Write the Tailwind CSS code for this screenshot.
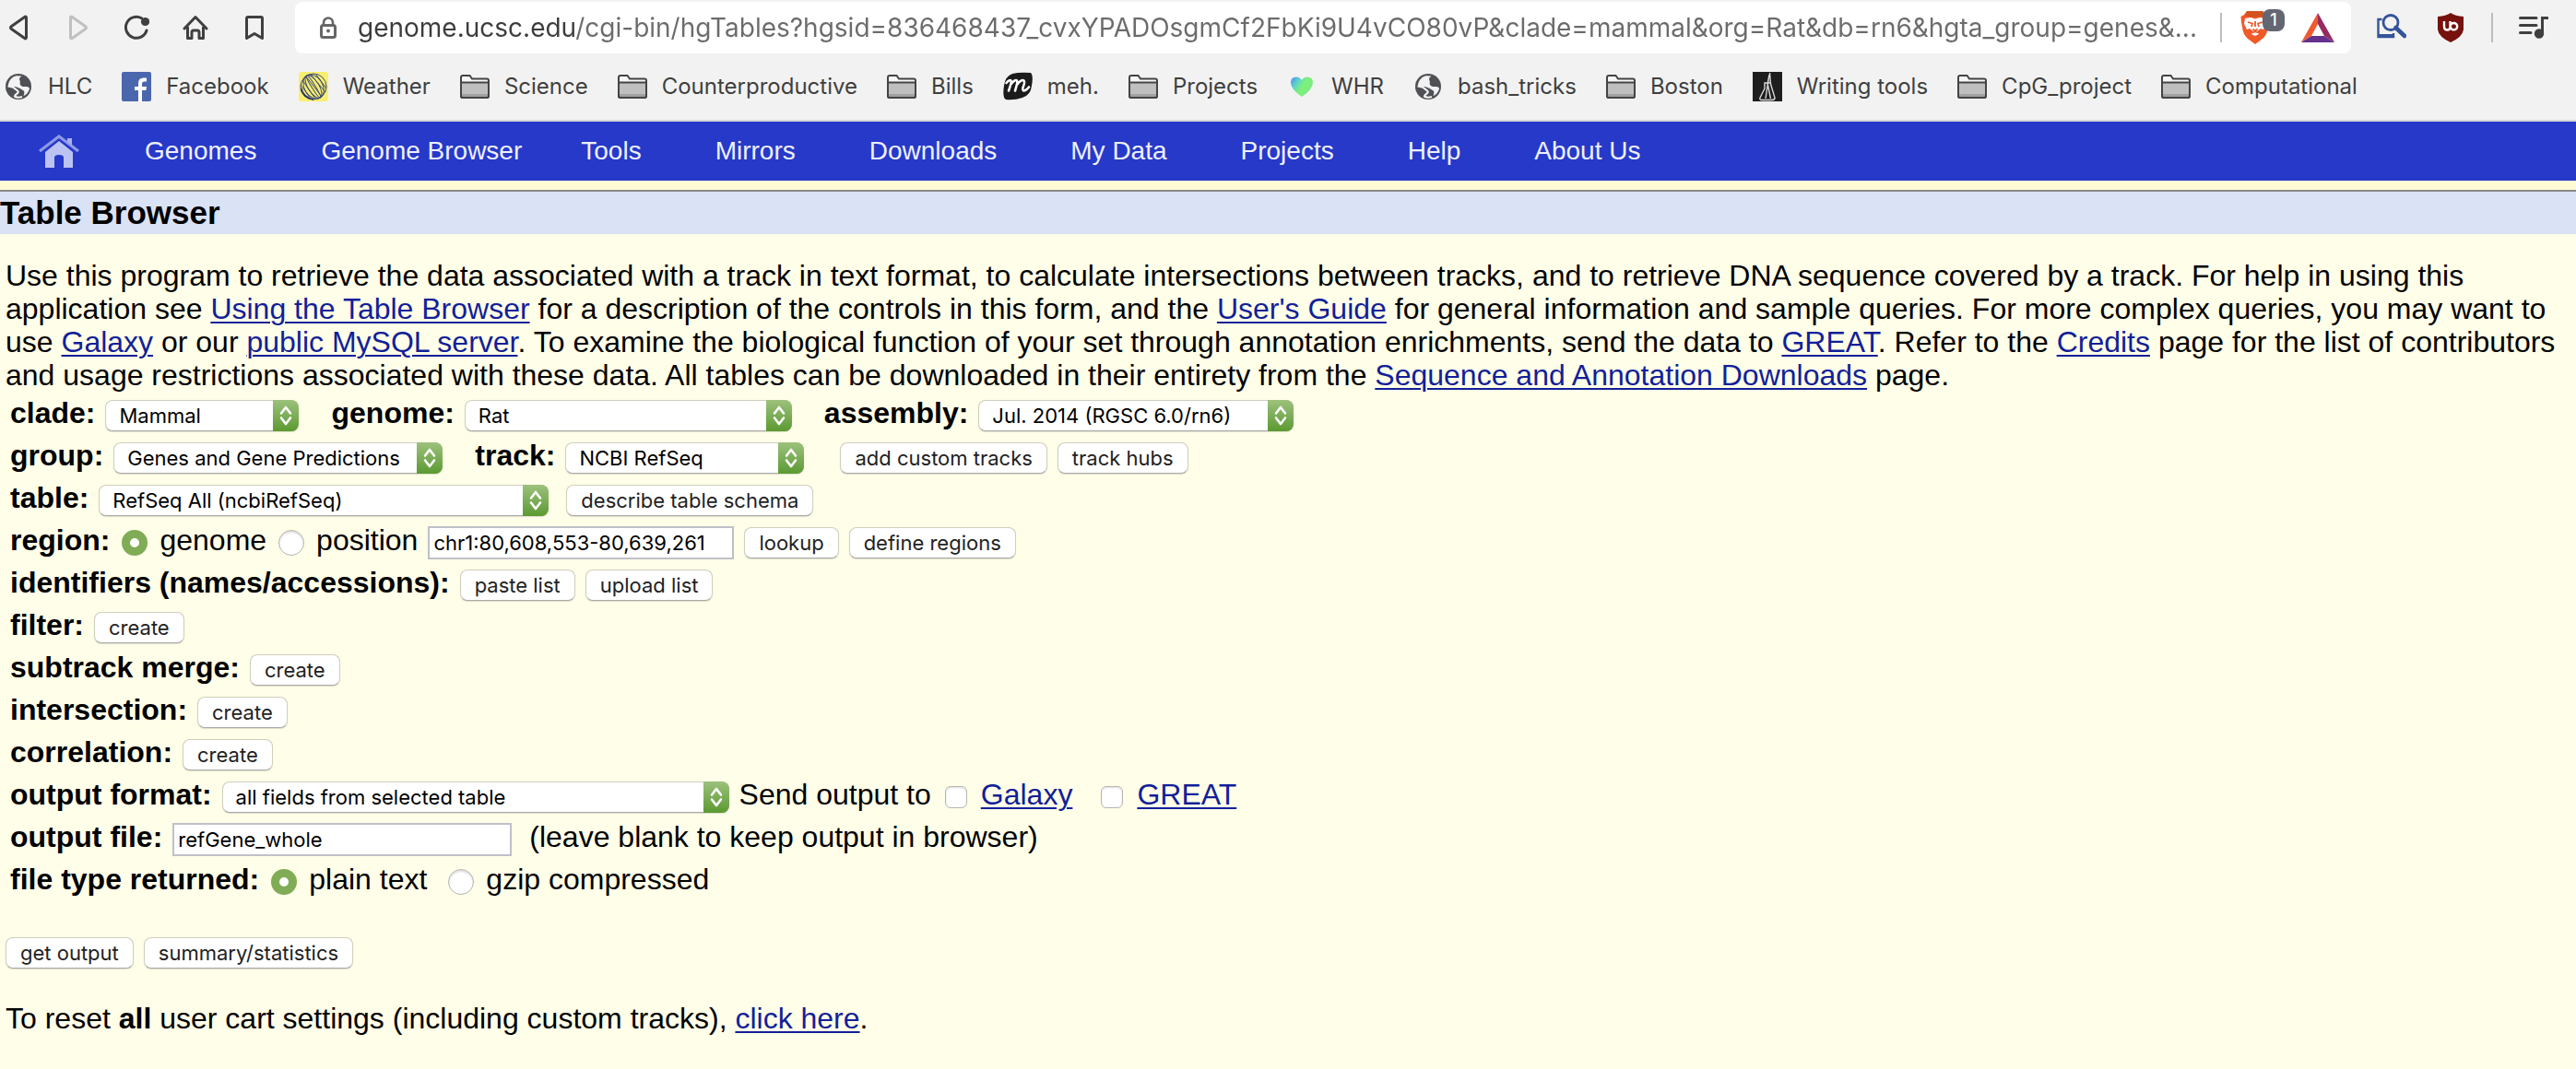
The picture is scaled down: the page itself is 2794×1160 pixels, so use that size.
<!DOCTYPE html>
<html lang="en">
<head>
<meta charset="utf-8">
<meta name="viewport" content="width=device-width, initial-scale=1">
<title>Table Browser</title>
<script src="https://cdn.jsdelivr.net/npm/@tailwindcss/browser@4"></script>
</head>
<body class="min-h-screen bg-[#fffee8] font-['Liberation_Sans',Arial,sans-serif] text-[32px] leading-[36px] text-black">

<!-- Shared icon shapes -->
<svg class="hidden">
  <symbol id="folder" viewBox="0 0 32 26">
    <path d="M1 23V3Q1 1 3 1H10.500L13 4.500H29Q31 4.500 31 6.500V23Q31 25 29 25H3Q1 25 1 23Z" fill="#f7f7f7" stroke="#444" stroke-width="2"/>
    <path d="M2 9H30V24H2Z" fill="#bfbfbf"/><path d="M2 21H30V24H2Z" fill="#a2a2a2"/>
    <path d="M1 8.500H31" stroke="#444" stroke-width="2"/>
    <path d="M1 9V23Q1 25 3 25H29Q31 25 31 23V9" fill="none" stroke="#444" stroke-width="2"/>
  </symbol>
  <symbol id="globe" viewBox="0 0 32 32">
    <circle cx="16" cy="16" r="14" fill="#505157"/>
    <path d="M19.500 4.500C17 6 16.500 8 17.500 9.500C18.500 11 17 12.500 18 14C19.500 16.500 22 16 24.500 16C27 16 28 17 28 18.500C27 22 24.500 25 21.500 26C22.500 23 23 21 21 20C18.500 18.500 17 17.500 14 16.500C11 15.500 8.500 16.500 5 16C4.500 10 9 5 14 4.200Z" fill="#f2f2f2"/>
    <path d="M4.500 15.500C8 16 11 16.500 12.500 18.500C14 20 16.500 20.500 15.500 22.500C15 24 12.500 24 12 26.500C14 28 17 28 20 27" fill="none" stroke="#f2f2f2" stroke-width="2.200"/>
    <path d="M11 7.500C13 8.500 16 9.500 14 11.500C12 12 10 12.500 9.500 14.500L5.500 13C6 10.500 8 8.500 11 7.500Z" fill="#505157" opacity=".0"/>
  </symbol>
  <symbol id="updown" viewBox="0 0 28 34">
    <path d="M9 14.500L14 8L19 14.500M9 19.500L14 26L19 19.500" fill="none" stroke="#fff" stroke-width="2.600" stroke-linecap="round" stroke-linejoin="round"/>
  </symbol>
</svg>

<header class="border-b-2 border-[#d6d8dc] bg-[#f2f2f2] pt-[2px] font-[Inter,sans-serif] text-[#3f3f3f]">
  <!-- Toolbar -->
  <div class="flex h-14 items-center gap-6 pr-[26px]">
    <button aria-label="Back" class="flex w-10 justify-center"><svg class="size-7" viewBox="0 0 28 28" fill="none" stroke="#3f3f3f" stroke-width="3" stroke-linejoin="round"><path d="M22.500 3V25Q22 27 20 25L6.500 15.500Q4.500 14 6.500 12.500L20 3Q22.500 1 22.500 3Z"/></svg></button>
    <button aria-label="Forward" class="flex w-10 justify-center"><svg class="size-7" viewBox="0 0 28 28" fill="none" stroke="#c0c0c0" stroke-width="3" stroke-linejoin="round"><path d="M6.500 3V25Q7 27 9 25L22.500 15.500Q24.500 14 22.500 12.500L9 3Q6.500 1 6.500 3Z"/></svg></button>
    <button aria-label="Reload" class="flex w-10 justify-center"><svg class="size-7" viewBox="0 0 28 28"><path d="M19.500 3.700A11.500 11.500 0 1 0 25 17" fill="none" stroke="#3f3f3f" stroke-width="3" stroke-linecap="round"/><circle cx="23.500" cy="7.500" r="4.600" fill="#3f3f3f"/></svg></button>
    <button aria-label="Home" class="flex w-10 justify-center"><svg class="size-7" viewBox="0 0 28 28" fill="none" stroke="#3f3f3f" stroke-width="3" stroke-linejoin="round" stroke-linecap="round"><path d="M2 15L14 2.500L26 15M5.500 13V25.500H10V19Q10 17 12 17H16Q18 17 18 19V25.500H22.500V13"/></svg></button>
    <button aria-label="Bookmark" class="flex w-10 justify-center"><svg class="size-7" viewBox="0 0 28 28" fill="none" stroke="#3f3f3f" stroke-width="3" stroke-linejoin="round"><path d="M5.500 4Q5.500 2.500 7 2.500H21Q22.500 2.500 22.500 4V25.500L14 20.500L5.500 25.500Z"/></svg></button>
    <div class="flex h-14 min-w-0 flex-1 items-center rounded-lg bg-white pr-[18px] pl-6">
      <svg class="size-6 shrink-0" viewBox="0 0 24 24"><path d="M7 10V6.500A5 5 0 0 1 17 6.500V10" fill="none" stroke="#666" stroke-width="2.600"/><rect x="4.500" y="9.500" width="15" height="13" rx="2" fill="none" stroke="#666" stroke-width="3"/><circle cx="12" cy="15.500" r="2" fill="#666"/></svg>
      <input type="text" aria-label="Address" class="ml-5 h-10 min-w-0 flex-1 bg-[linear-gradient(90deg,#3c3c3c_236px,#6b6b6b_236px)] bg-clip-text text-[28px] text-transparent outline-none" value="genome.ucsc.edu/cgi-bin/hgTables?hgsid=836468437_cvxYPADOsgmCf2FbKi9U4vCO80vP&amp;clade=mammal&amp;org=Rat&amp;db=rn6&amp;hgta_group=genes&amp;...">
      <div class="h-8 w-[2px] bg-[#bdbdbd]"></div>
      <button aria-label="Shields" class="relative ml-5 h-9 w-8">
        <svg class="h-9 w-8" viewBox="0 0 32 36"><path d="M7 0H24L28 4L31 7L29.500 12V20Q28.500 26 24 30L16 36L8 30Q3.500 26 2.500 20L1 12L0.500 6L4 4Z" fill="#f0592a"/><path d="M7 0H24L27 5Q16 8 5 5Z" fill="#d3521f"/><path d="M5 8L11 7L16 8.500L21 7L27 8L28 14L25 20L22 19L18 22L20 25L16 27L12 25L14 22L10 19L7 20L4 14Z" fill="#fff"/><path d="M8 12L13 13.500L12 17M24 12L19 13.500L20 17M16 11V17M13.500 19.500L16 21.500L18.500 19.500M10 24L16 22.500L22 24" fill="none" stroke="#f0592a" stroke-width="1.800"/></svg>
        <span class="absolute -top-[2px] left-6 flex size-6 items-center justify-center rounded-lg bg-[#646672] text-[18px] leading-6 font-medium text-white">1</span>
      </button>
      <button aria-label="Rewards" class="ml-[34px]"><svg class="h-8 w-9" viewBox="0 0 36 32"><path d="M18 0L0 32L11 25L18 12Z" fill="#f1592f"/><path d="M18 0L36 32L25 25L18 12Z" fill="#962b60"/><path d="M0 32H36L25 25H11Z" fill="#65318e"/></svg></button>
    </div>
    <button aria-label="Image search" class="flex w-10 justify-center"><svg class="size-8" viewBox="0 0 32 32"><path d="M5.500 7H1.500V26H18V22" fill="none" stroke="#34539b" stroke-width="2.400"/><path d="M1 23H18V27H1Z" fill="#34539b"/><circle cx="15" cy="10.500" r="8" fill="#f2f2f2" stroke="#34539b" stroke-width="2.800"/><path d="M20.500 16L30 25" stroke="#34539b" stroke-width="4.500" stroke-linecap="round"/></svg></button>
    <button aria-label="Content blocker" class="flex w-10 justify-center"><svg class="h-8 w-7" viewBox="0 0 28 32"><path d="M14 0Q19 3.500 28 4V18Q27 26 14 32Q1 26 0 18V4Q9 3.500 14 0Z" fill="#76110d"/><path d="M7 9V15Q7 18.500 10.500 18.500Q13.500 18.500 13.500 15V9M13.800 14.500A3.700 3.700 0 1 0 17.500 11Q13.800 11 13.500 15" fill="none" stroke="#fff" stroke-width="2.400"/></svg></button>
    <div class="h-8 w-[2px] bg-[#bdbdbd]"></div>
    <button aria-label="Media queue" class="flex w-10 justify-center"><svg class="size-8" viewBox="0 0 32 32" stroke="#3f3f3f" stroke-width="3"><path d="M1.500 5.500H19M1.500 13.500H19M1.500 21.500H13" stroke-linecap="round"/><path d="M25.500 22V5.500H31" fill="none" stroke-linecap="round"/><circle cx="22" cy="22.500" r="3.700" fill="#3f3f3f"/></svg></button>
  </div>

  <!-- Bookmarks bar -->
  <nav aria-label="Bookmarks" class="flex h-18 items-center gap-8 pl-1 text-[24px] whitespace-nowrap">
    <a href="#" class="flex items-center gap-4"><svg class="size-8"><use href="#globe"/></svg>HLC</a>
    <a href="#" class="flex items-center gap-4"><svg class="size-8" viewBox="0 0 32 32"><rect width="32" height="32" rx="2" fill="#4a66ad"/><path d="M18 32V20H14V16H18V12.500Q18 6.500 23.500 6.500H27V10.500H24.500Q22 10.500 22 13V16H27L26.400 20H22V32Z" fill="#fff"/></svg>Facebook</a>
    <a href="#" class="flex items-center gap-4"><svg class="size-8" viewBox="0 0 32 32"><rect width="32" height="32" rx="3" fill="#f9ee70"/><g fill="none" stroke="#3c4c72" stroke-width="1"><circle cx="16" cy="16" r="14"/><ellipse cx="16" cy="16" rx="14" ry="10" transform="rotate(58 16 16)"/><ellipse cx="16" cy="16" rx="14" ry="6" transform="rotate(58 16 16)"/><ellipse cx="16" cy="16" rx="14" ry="2" transform="rotate(58 16 16)"/><path d="M4 9L18 29M8 5L25 27M13 3L29 22M19 3L30 18M2 14L13 29"/></g><path d="M2.500 18Q5 28 16 30" fill="none" stroke="#27386b" stroke-width="2"/></svg>Weather</a>
    <a href="#" class="flex items-center gap-4"><svg class="h-[26px] w-8"><use href="#folder"/></svg>Science</a>
    <a href="#" class="flex items-center gap-4"><svg class="h-[26px] w-8"><use href="#folder"/></svg>Counterproductive</a>
    <a href="#" class="flex items-center gap-4"><svg class="h-[26px] w-8"><use href="#folder"/></svg>Bills</a>
    <a href="#" class="flex items-center gap-4"><svg class="size-8" viewBox="0 0 32 32"><path d="M10 2Q18 0 30 1Q33 4 31 15Q30 25 21 28Q12 31 3 30Q-1 28 1 15Q2 5 10 2Z" fill="#1b1b1b"/><path d="M3.500 12Q7 8 8.500 9.500Q9.500 11 6 20.500M8 14Q13 7.500 15 9.500Q16 11 13 20.500M15 14Q20 7.500 22.500 9.500Q24 11 21.500 17Q20.500 21.500 24 20Q26 19 28 16.500" fill="none" stroke="#fff" stroke-width="2.600" stroke-linecap="round"/></svg>meh.</a>
    <a href="#" class="flex items-center gap-4"><svg class="h-[26px] w-8"><use href="#folder"/></svg>Projects</a>
    <a href="#" class="flex items-center gap-4"><svg class="size-8" viewBox="0 0 32 32"><defs><linearGradient id="heart" x1="0" y1="0" x2="1" y2=".6"><stop offset="0" stop-color="#4d8cf5"/><stop offset=".35" stop-color="#62d6c4"/><stop offset=".6" stop-color="#7cf277"/><stop offset="1" stop-color="#7ee88a"/></linearGradient></defs><path d="M16 27Q4 19 4 11.500Q4 5.500 10 5.500Q14 5.500 16 9Q18 5.500 22 5.500Q28 5.500 28 11.500Q28 19 16 27Z" fill="url(#heart)"/></svg>WHR</a>
    <a href="#" class="flex items-center gap-4"><svg class="size-8"><use href="#globe"/></svg>bash_tricks</a>
    <a href="#" class="flex items-center gap-4"><svg class="h-[26px] w-8"><use href="#folder"/></svg>Boston</a>
    <a href="#" class="flex items-center gap-4"><svg class="size-8" viewBox="0 0 32 32"><rect width="32" height="32" fill="#1e1e1e"/><path d="M18.500 1L19.500 13L24 28Q24 30.500 21 30.500H10Q7 30.500 8 28L13 18V12H19M17.500 6L14 29M16 12L19.500 29M18 3L16 14" fill="none" stroke="#d8d8d8" stroke-width="1.400"/></svg>Writing tools</a>
    <a href="#" class="flex items-center gap-4"><svg class="h-[26px] w-8"><use href="#folder"/></svg>CpG_project</a>
    <a href="#" class="flex items-center gap-4"><svg class="h-[26px] w-8"><use href="#folder"/></svg>Computational</a>
  </nav>
</header>

<!-- Site menu -->
<nav aria-label="Main menu" class="mb-[10px] flex h-16 items-center bg-[#2639c9] pl-[42px] text-[28px] whitespace-nowrap text-[#eef0ff]">
  <a href="#" aria-label="Home" class="mr-[71px]"><svg class="h-9 w-11" viewBox="0 0 44 36"><path d="M1 18L22 2L43 18" fill="none" stroke="#8f99e6" stroke-width="3"/><path d="M31 4H36V12L31 8Z" fill="#a8b0ee"/><path d="M7 19L22 7L37 19V36H27V25Q27 22 22 22Q17 22 17 25V36H7Z" fill="#bcc3f2"/></svg></a>
  <a href="#" class="mr-[70px]">Genomes</a>
  <a href="#" class="mr-16">Genome Browser</a>
  <a href="#" class="mr-20">Tools</a>
  <a href="#" class="mr-20">Mirrors</a>
  <a href="#" class="mr-20">Downloads</a>
  <a href="#" class="mr-20">My Data</a>
  <a href="#" class="mr-20">Projects</a>
  <a href="#" class="mr-20">Help</a>
  <a href="#">About Us</a>
</nav>

<main>
  <h1 class="border-t-2 border-[#888] bg-[#dae2f5] text-[35px] leading-[46px] font-bold shadow-[0_-10px_0_#fffad6]">Table Browser</h1>

  <p class="mt-[27px] px-[6px]">Use this program to retrieve the data associated with a track in text format, to calculate intersections between tracks, and to retrieve DNA sequence covered by a track. For help in using this application see <a href="#" class="text-[#121f99] underline decoration-2 underline-offset-[3px]">Using the Table Browser</a> for a description of the controls in this form, and the <a href="#" class="text-[#121f99] underline decoration-2 underline-offset-[3px]">User's Guide</a> for general information and sample queries. For more complex queries, you may want to use <a href="#" class="text-[#121f99] underline decoration-2 underline-offset-[3px]">Galaxy</a> or our <a href="#" class="text-[#121f99] underline decoration-2 underline-offset-[3px]">public MySQL server</a>. To examine the biological function of your set through annotation enrichments, send the data to <a href="#" class="text-[#121f99] underline decoration-2 underline-offset-[3px]">GREAT</a>. Refer to the <a href="#" class="text-[#121f99] underline decoration-2 underline-offset-[3px]">Credits</a> page for the list of contributors and usage restrictions associated with these data. All tables can be downloaded in their entirety from the <a href="#" class="text-[#121f99] underline decoration-2 underline-offset-[3px]">Sequence and Annotation Downloads</a> page.</p>

  <form class="leading-[46px] whitespace-nowrap" onsubmit="return false">
    <div class="flex h-[46px] items-baseline gap-[11px] pl-[11px]">
      <label for="clade" class="font-bold">clade:</label>
      <span class="relative flex"><select id="clade" class="h-[34px] w-[210px] appearance-none rounded-lg border border-[#cfcfbf] border-b-[#aaa] bg-white pr-8 pl-[14px] font-[Inter,sans-serif] text-[22px] leading-8 text-black shadow-[0_1px_1px_#0002]"><option>Mammal</option></select><svg class="pointer-events-none absolute inset-y-0 right-0 h-[34px] w-7 rounded-r-lg bg-linear-to-b from-[#9dc17c] to-[#5b9a2f]"><use href="#updown"/></svg></span>
      <label for="org" class="ml-6 font-bold">genome:</label>
      <span class="relative flex"><select id="org" class="h-[34px] w-[355px] appearance-none rounded-lg border border-[#cfcfbf] border-b-[#aaa] bg-white pr-8 pl-[14px] font-[Inter,sans-serif] text-[22px] leading-8 text-black shadow-[0_1px_1px_#0002]"><option>Rat</option></select><svg class="pointer-events-none absolute inset-y-0 right-0 h-[34px] w-7 rounded-r-lg bg-linear-to-b from-[#9dc17c] to-[#5b9a2f]"><use href="#updown"/></svg></span>
      <label for="db" class="ml-6 font-bold">assembly:</label>
      <span class="relative flex"><select id="db" class="h-[34px] w-[342px] appearance-none rounded-lg border border-[#cfcfbf] border-b-[#aaa] bg-white pr-8 pl-[14px] font-[Inter,sans-serif] text-[22px] leading-8 text-black shadow-[0_1px_1px_#0002]"><option>Jul. 2014 (RGSC 6.0/rn6)</option></select><svg class="pointer-events-none absolute inset-y-0 right-0 h-[34px] w-7 rounded-r-lg bg-linear-to-b from-[#9dc17c] to-[#5b9a2f]"><use href="#updown"/></svg></span>
    </div>
    <div class="flex h-[46px] items-baseline gap-[11px] pl-[11px]">
      <label for="group" class="font-bold">group:</label>
      <span class="relative flex"><select id="group" class="h-[34px] w-[357px] appearance-none rounded-lg border border-[#cfcfbf] border-b-[#aaa] bg-white pr-8 pl-[14px] font-[Inter,sans-serif] text-[22px] leading-8 text-black shadow-[0_1px_1px_#0002]"><option>Genes and Gene Predictions</option></select><svg class="pointer-events-none absolute inset-y-0 right-0 h-[34px] w-7 rounded-r-lg bg-linear-to-b from-[#9dc17c] to-[#5b9a2f]"><use href="#updown"/></svg></span>
      <label for="track" class="ml-6 font-bold">track:</label>
      <span class="relative flex"><select id="track" class="h-[34px] w-[259px] appearance-none rounded-lg border border-[#cfcfbf] border-b-[#aaa] bg-white pr-8 pl-[14px] font-[Inter,sans-serif] text-[22px] leading-8 text-black shadow-[0_1px_1px_#0002]"><option>NCBI RefSeq</option></select><svg class="pointer-events-none absolute inset-y-0 right-0 h-[34px] w-7 rounded-r-lg bg-linear-to-b from-[#9dc17c] to-[#5b9a2f]"><use href="#updown"/></svg></span>
      <button class="ml-7 h-[34px] rounded-lg border border-[#cfcfbf] border-b-[#aaa] bg-white px-[15px] font-[Inter,sans-serif] text-[22px] leading-8 text-[#222] shadow-[0_1px_1px_#0002]">add custom tracks</button>
      <button class="h-[34px] rounded-lg border border-[#cfcfbf] border-b-[#aaa] bg-white px-[15px] font-[Inter,sans-serif] text-[22px] leading-8 text-[#222] shadow-[0_1px_1px_#0002]">track hubs</button>
    </div>
    <div class="flex h-[46px] items-baseline gap-[11px] pl-[11px]">
      <label for="table" class="font-bold">table:</label>
      <span class="relative flex"><select id="table" class="h-[34px] w-[488px] appearance-none rounded-lg border border-[#cfcfbf] border-b-[#aaa] bg-white pr-8 pl-[14px] font-[Inter,sans-serif] text-[22px] leading-8 text-black shadow-[0_1px_1px_#0002]"><option>RefSeq All (ncbiRefSeq)</option></select><svg class="pointer-events-none absolute inset-y-0 right-0 h-[34px] w-7 rounded-r-lg bg-linear-to-b from-[#9dc17c] to-[#5b9a2f]"><use href="#updown"/></svg></span>
      <button class="ml-2 h-[34px] rounded-lg border border-[#cfcfbf] border-b-[#aaa] bg-white px-[15px] font-[Inter,sans-serif] text-[22px] leading-8 text-[#222] shadow-[0_1px_1px_#0002]">describe table schema</button>
    </div>
    <div class="flex h-[46px] items-baseline gap-[11px] pl-[11px]">
      <b>region:</b>
      <input type="radio" id="r-genome" name="region" checked class="mx-[2px] mt-[6px] size-7 appearance-none self-center rounded-full border border-[#b5b5b0] bg-white inset-shadow-[0_2px_2px_#0002] checked:border-[9px] checked:border-[#80ac55] checked:inset-shadow-none">
      <label for="r-genome">genome</label>
      <input type="radio" id="r-position" name="region" class="mx-[2px] mt-[6px] size-7 appearance-none self-center rounded-full border border-[#b5b5b0] bg-white inset-shadow-[0_2px_2px_#0002] checked:border-[9px] checked:border-[#80ac55] checked:inset-shadow-none">
      <label for="r-position">position</label>
      <input type="text" aria-label="position" value="chr1:80,608,553-80,639,261" class="h-9 w-[332px] border-2 border-[#bfc0c8] bg-white px-1 font-[Inter,sans-serif] text-[22px] leading-8">
      <button class="h-[34px] rounded-lg border border-[#cfcfbf] border-b-[#aaa] bg-white px-[15px] font-[Inter,sans-serif] text-[22px] leading-8 text-[#222] shadow-[0_1px_1px_#0002]">lookup</button>
      <button class="h-[34px] rounded-lg border border-[#cfcfbf] border-b-[#aaa] bg-white px-[15px] font-[Inter,sans-serif] text-[22px] leading-8 text-[#222] shadow-[0_1px_1px_#0002]">define regions</button>
    </div>
    <div class="flex h-[46px] items-baseline gap-[11px] pl-[11px]">
      <b>identifiers (names/accessions):</b>
      <button class="h-[34px] rounded-lg border border-[#cfcfbf] border-b-[#aaa] bg-white px-[15px] font-[Inter,sans-serif] text-[22px] leading-8 text-[#222] shadow-[0_1px_1px_#0002]">paste list</button>
      <button class="h-[34px] rounded-lg border border-[#cfcfbf] border-b-[#aaa] bg-white px-[15px] font-[Inter,sans-serif] text-[22px] leading-8 text-[#222] shadow-[0_1px_1px_#0002]">upload list</button>
    </div>
    <div class="flex h-[46px] items-baseline gap-[11px] pl-[11px]">
      <b>filter:</b>
      <button class="h-[34px] rounded-lg border border-[#cfcfbf] border-b-[#aaa] bg-white px-[15px] font-[Inter,sans-serif] text-[22px] leading-8 text-[#222] shadow-[0_1px_1px_#0002]">create</button>
    </div>
    <div class="flex h-[46px] items-baseline gap-[11px] pl-[11px]">
      <b>subtrack merge:</b>
      <button class="h-[34px] rounded-lg border border-[#cfcfbf] border-b-[#aaa] bg-white px-[15px] font-[Inter,sans-serif] text-[22px] leading-8 text-[#222] shadow-[0_1px_1px_#0002]">create</button>
    </div>
    <div class="flex h-[46px] items-baseline gap-[11px] pl-[11px]">
      <b>intersection:</b>
      <button class="h-[34px] rounded-lg border border-[#cfcfbf] border-b-[#aaa] bg-white px-[15px] font-[Inter,sans-serif] text-[22px] leading-8 text-[#222] shadow-[0_1px_1px_#0002]">create</button>
    </div>
    <div class="flex h-[46px] items-baseline gap-[11px] pl-[11px]">
      <b>correlation:</b>
      <button class="h-[34px] rounded-lg border border-[#cfcfbf] border-b-[#aaa] bg-white px-[15px] font-[Inter,sans-serif] text-[22px] leading-8 text-[#222] shadow-[0_1px_1px_#0002]">create</button>
    </div>
    <div class="flex h-[46px] items-baseline gap-[11px] pl-[11px]">
      <label for="format" class="font-bold">output format:</label>
      <span class="relative flex"><select id="format" class="h-[34px] w-[550px] appearance-none rounded-lg border border-[#cfcfbf] border-b-[#aaa] bg-white pr-8 pl-[14px] font-[Inter,sans-serif] text-[22px] leading-8 text-black shadow-[0_1px_1px_#0002]"><option>all fields from selected table</option></select><svg class="pointer-events-none absolute inset-y-0 right-0 h-[34px] w-7 rounded-r-lg bg-linear-to-b from-[#9dc17c] to-[#5b9a2f]"><use href="#updown"/></svg></span>
      <span>Send output to</span>
      <input type="checkbox" aria-label="Send output to Galaxy" class="mx-1 mt-[6px] size-6 appearance-none self-center rounded-md border border-[#b5b5b0] bg-white inset-shadow-[0_1px_2px_#0002]">
      <a href="#" class="text-[#121f99] underline decoration-2 underline-offset-[3px]">Galaxy</a>
      <input type="checkbox" aria-label="Send output to GREAT" class="mr-1 ml-5 mt-[6px] size-6 appearance-none self-center rounded-md border border-[#b5b5b0] bg-white inset-shadow-[0_1px_2px_#0002]">
      <a href="#" class="text-[#121f99] underline decoration-2 underline-offset-[3px]">GREAT</a>
    </div>
    <div class="flex h-[46px] items-baseline gap-[11px] pl-[11px]">
      <label for="outfile" class="font-bold">output file:</label>
      <input type="text" id="outfile" value="refGene_whole" class="h-9 w-[368px] border-2 border-[#bfc0c8] bg-white px-1 font-[Inter,sans-serif] text-[22px] leading-8">
      <span class="ml-2">(leave blank to keep output in browser)</span>
    </div>
    <div class="flex h-[46px] items-baseline gap-[11px] pl-[11px]">
      <b>file type returned:</b>
      <input type="radio" id="t-plain" name="filetype" checked class="mx-[2px] mt-[6px] size-7 appearance-none self-center rounded-full border border-[#b5b5b0] bg-white inset-shadow-[0_2px_2px_#0002] checked:border-[9px] checked:border-[#80ac55] checked:inset-shadow-none">
      <label for="t-plain">plain text</label>
      <input type="radio" id="t-gzip" name="filetype" class="mr-[2px] ml-3 mt-[6px] size-7 appearance-none self-center rounded-full border border-[#b5b5b0] bg-white inset-shadow-[0_2px_2px_#0002] checked:border-[9px] checked:border-[#80ac55] checked:inset-shadow-none">
      <label for="t-gzip">gzip compressed</label>
    </div>
    <div class="mt-10 flex gap-[11px] pl-[6px]">
      <button class="h-[34px] rounded-lg border border-[#cfcfbf] border-b-[#aaa] bg-white px-[15px] font-[Inter,sans-serif] text-[22px] leading-8 text-[#222] shadow-[0_1px_1px_#0002]">get output</button>
      <button class="h-[34px] rounded-lg border border-[#cfcfbf] border-b-[#aaa] bg-white px-[15px] font-[Inter,sans-serif] text-[22px] leading-8 text-[#222] shadow-[0_1px_1px_#0002]">summary/statistics</button>
    </div>
  </form>

  <p class="mt-9 px-[6px]">To reset <b>all</b> user cart settings (including custom tracks), <a href="#" class="text-[#121f99] underline decoration-2 underline-offset-[3px]">click here</a>.</p>
</main>
</body>
</html>
